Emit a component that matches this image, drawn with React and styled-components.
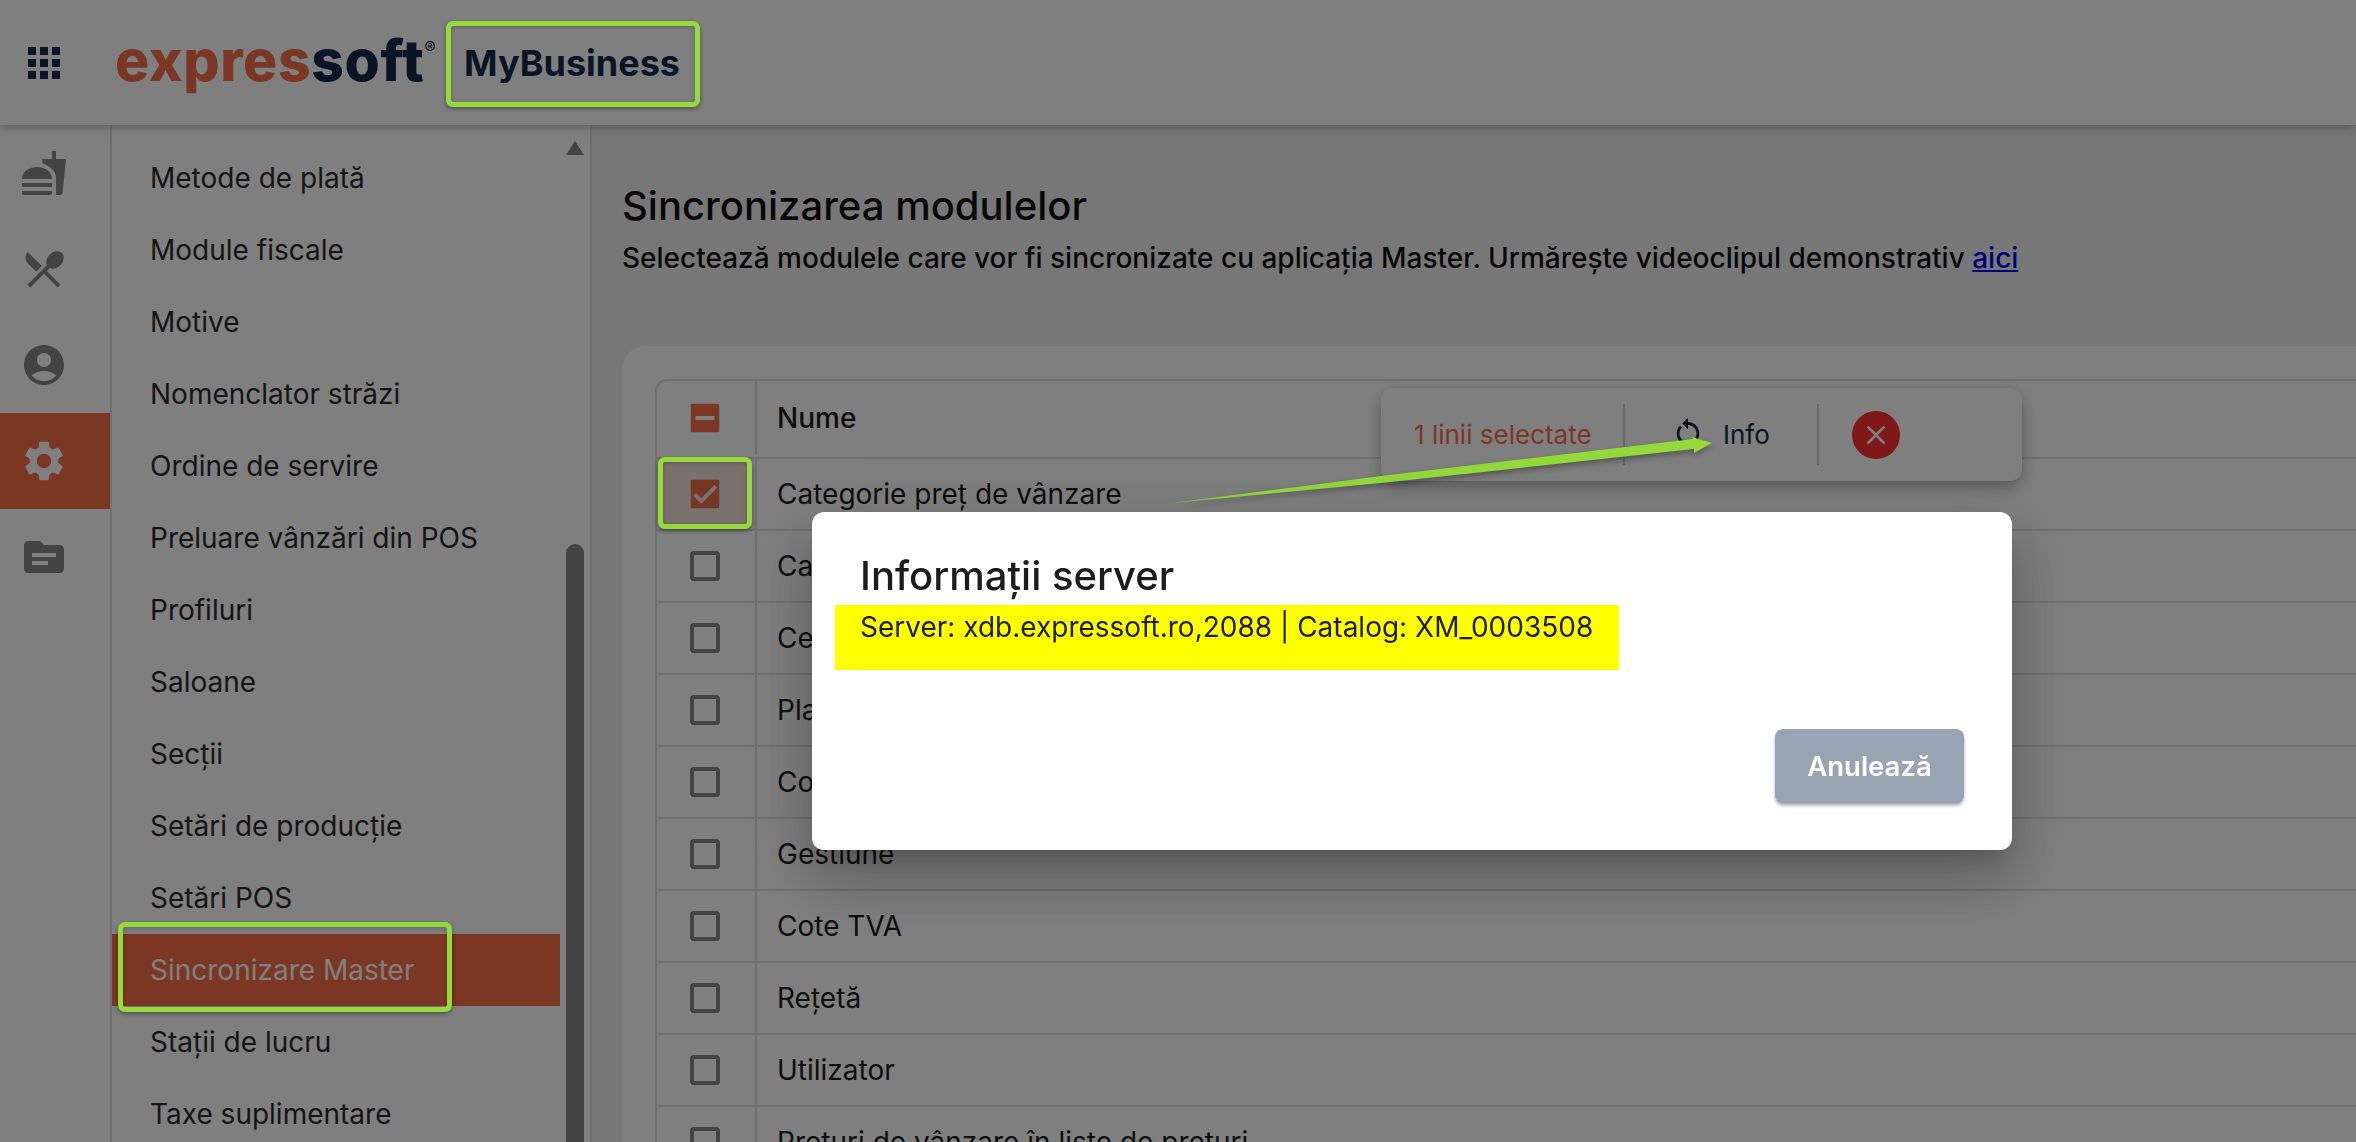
import React from 'react';
import styled, { createGlobalStyle } from 'styled-components';
import {
    MdFastfood,
    MdRestaurantMenu,
    MdAccountCircle,
    MdSettings,
    MdTopic,
    MdRestartAlt,
    MdClose,
    MdCheck,
    MdRemove,
} from 'react-icons/md';

const GlobalStyle = createGlobalStyle`
    html, body {
        margin: 0;
        padding: 0;
        height: 100%;
        overflow: hidden;
        background: #fff;
        font-family: "Inter", "Liberation Sans", sans-serif;
        color: #1a1a1a;
    }
    * {
        box-sizing: border-box;
    }
`;

const Page = styled.div`
    width: 100vw;
    height: 100vh;
    display: flex;
    flex-direction: column;
    overflow: hidden;
`;

const Header = styled.header`
    flex: 0 0 125px;
    display: flex;
    align-items: center;
    padding-left: 28px;
    background: #fff;
    box-shadow: 0 3px 9px rgba(0, 0, 0, 0.25);
    position: relative;
    z-index: 2;
`;

const AppsGrid = styled.div`
    display: grid;
    grid-template-columns: repeat(3, 8px);
    grid-auto-rows: 8px;
    gap: 4px;
    margin-right: 55px;
    div {
        background: #14294a;
    }
`;

const Logo = styled.div`
    flex: 0 0 349px;
    font-size: 57px;
    font-weight: 800;
    letter-spacing: 0.6px;
    line-height: 1;
    color: #14294a;
    margin-top: -4px;
    span {
        color: #f66e48;
    }
    sup {
        font-size: 17px;
        font-weight: 400;
        letter-spacing: 0;
        vertical-align: 27px;
        line-height: 0;
    }
`;

const Product = styled.div`
    font-size: 36px;
    font-weight: 700;
    color: #14294a;
`;

const Body = styled.div`
    flex: 1;
    display: flex;
    min-height: 0;
`;

const Rail = styled.nav`
    flex: 0 0 112px;
    border-right: 2px solid #e0e0e0;
`;

const RailItem = styled.div`
    height: 96px;
    display: flex;
    align-items: center;
    padding-left: 20px;
    font-size: 48px;
    color: ${(p) => (p.$active ? '#fff' : '#868686')};
    background: ${(p) => (p.$active ? '#f66e48' : 'transparent')};
`;

const Sidebar = styled.aside`
    flex: 0 0 480px;
    display: flex;
    border-right: 2px solid #e0e0e0;
`;

const Menu = styled.div`
    flex: 0 0 448px;
    padding-top: 17px;
`;

const MenuItem = styled.div`
    height: 72px;
    display: flex;
    align-items: center;
    padding-left: 38px;
    font-size: 28px;
    color: ${(p) => (p.$active ? '#fff' : '#2b2b2b')};
    background: ${(p) => (p.$active ? '#f66e48' : 'transparent')};
`;

const ScrollTrack = styled.div`
    flex: 0 0 18px;
    margin-left: 6px;
    display: flex;
    flex-direction: column;
    padding-top: 16px;
`;

const ScrollArrow = styled.div`
    width: 0;
    height: 0;
    margin: 0 auto;
    border-left: 9px solid transparent;
    border-right: 9px solid transparent;
    border-bottom: 14px solid #868686;
`;

const ScrollThumb = styled.div`
    flex: 1;
    margin-top: 389px;
    background: #868686;
    border-radius: 9px 9px 0 0;
`;

const Main = styled.main`
    flex: 1;
    min-width: 0;
    background: #efefef;
    padding: 59px 0 0 30px;
    overflow: hidden;
`;

const Title = styled.h1`
    margin: 0;
    font-size: 40px;
    line-height: 44px;
    font-weight: 500;
    color: #111;
`;

const Subtitle = styled.p`
    margin: 10px 0 0;
    font-size: 28px;
    line-height: 40px;
    font-weight: 500;
    color: #111;
    a {
        color: #0000ee;
    }
`;

const Card = styled.section`
    margin-top: 68px;
    width: 1800px;
    padding: 33px;
    background: #fff;
    border-radius: 24px 0 0 0;
    position: relative;
`;

const Table = styled.div`
    border: 2px solid #dedede;
    border-radius: 12px 0 0 0;
`;

const Row = styled.div`
    display: flex;
    height: ${(p) => (p.$head ? '78px' : '72px')};
    padding-bottom: ${(p) => (p.$head ? '2px' : '0')};
    border-bottom: 2px solid #dedede;
`;

const CheckCell = styled.div`
    flex: 0 0 100px;
    display: flex;
    align-items: center;
    justify-content: center;
    padding-right: 2px;
    border-right: 2px solid #dedede;
`;

const NameCell = styled.div`
    flex: 1;
    display: flex;
    align-items: center;
    padding-left: 20px;
    font-size: 28px;
    font-weight: ${(p) => (p.$head ? 500 : 400)};
    color: #1c1c1c;
`;

const Box = styled.div`
    width: 30px;
    height: 30px;
    border-radius: 4px;
    display: flex;
    align-items: center;
    justify-content: center;
    font-size: 30px;
    color: #fff;
    background: ${(p) => (p.$on ? '#f66e48' : 'transparent')};
    border: ${(p) => (p.$on ? 'none' : '4px solid #868686')};
    svg {
        stroke: currentColor;
        stroke-width: 1.2;
    }
`;

const SelectionBar = styled.div`
    position: absolute;
    left: 759px;
    top: 42px;
    width: 641px;
    height: 93px;
    display: flex;
    align-items: center;
    background: #fff;
    border-radius: 12px;
    box-shadow: 0 6px 16px rgba(0, 0, 0, 0.3);
`;

const BarSection = styled.div`
    height: 61px;
    display: flex;
    align-items: center;
    font-size: 26px;
    flex: 0 0 ${(p) => p.$width}px;
    padding-left: ${(p) => p.$pad}px;
    gap: 18px;
    color: ${(p) => p.$color};
    border-right: ${(p) => (p.$line ? '2px solid #d0d0d0' : 'none')};
`;

const RefreshIcon = styled(MdRestartAlt)`
    margin-top: -6px;
`;

const CloseButton = styled.div`
    width: 48px;
    height: 48px;
    border-radius: 50%;
    display: flex;
    align-items: center;
    justify-content: center;
    font-size: 32px;
    background: #fe3333;
    color: #fff;
`;

const Overlay = styled.div`
    position: fixed;
    inset: 0;
    z-index: 3;
    background: rgba(0, 0, 0, 0.5);
`;

const Dialog = styled.div`
    position: fixed;
    z-index: 4;
    left: 812px;
    top: 512px;
    width: 1200px;
    height: 338px;
    padding: 42px 48px 47px 48px;
    display: flex;
    flex-direction: column;
    background: #fff;
    border-radius: 12px;
    box-shadow: 0 16px 22px -10px rgba(0, 0, 0, 0.2), 0 36px 57px 4px rgba(0, 0, 0, 0.14),
        0 14px 69px 12px rgba(0, 0, 0, 0.12);
`;

const DialogTitle = styled.h2`
    margin: 0;
    font-size: 40px;
    line-height: 44px;
    font-weight: 500;
    color: #1c1c1c;
`;

const DialogText = styled.div`
    margin-top: 9px;
    font-size: 28px;
    line-height: 40px;
    color: #1c1c1c;
    position: relative;
    z-index: 1;
`;

const HighlightBlock = styled.div`
    position: absolute;
    left: 23px;
    top: 93px;
    width: 784px;
    height: 65px;
    background: #ffff00;
`;

const DialogActions = styled.div`
    margin-top: auto;
    display: flex;
    justify-content: flex-end;
`;

const CancelButton = styled.button`
    width: 189px;
    height: 74px;
    border: none;
    border-radius: 8px;
    font-family: inherit;
    font-size: 27.5px;
    font-weight: 600;
    color: #fff;
    background: #9aa3b3;
    box-shadow: 0 3px 4px -1px rgba(0, 0, 0, 0.3), 0 2px 3px rgba(0, 0, 0, 0.14);
`;

// callouts drawn on top of the screenshot, not dimmed by the overlay
const Callout = styled.div`
    position: fixed;
    z-index: 4;
    left: ${(p) => p.$x}px;
    top: ${(p) => p.$y}px;
    width: ${(p) => p.$w}px;
    height: ${(p) => p.$h}px;
    border: 5px solid #95d93c;
    border-radius: 7px;
    box-shadow: 0 2px 5px rgba(0, 0, 0, 0.4), inset 0 1px 4px rgba(0, 0, 0, 0.25);
    background: ${(p) => p.$tint || 'transparent'};
`;

const ArrowSvg = styled.svg`
    position: fixed;
    z-index: 4;
    left: 1160px;
    top: 430px;
    filter: drop-shadow(0 3px 3px rgba(0, 0, 0, 0.35));
`;

const menuItems = [
    'Metode de plată',
    'Module fiscale',
    'Motive',
    'Nomenclator străzi',
    'Ordine de servire',
    'Preluare vânzări din POS',
    'Profiluri',
    'Saloane',
    'Secții',
    'Setări de producție',
    'Setări POS',
    'Sincronizare Master',
    'Stații de lucru',
    'Taxe suplimentare',
];

const tableRows = [
    'Categorie preț de vânzare',
    'Casă de marcat',
    'Centre de cost',
    'Plată',
    'Companii',
    'Gestiune',
    'Cote TVA',
    'Rețetă',
    'Utilizator',
    'Prețuri de vânzare în liste de prețuri',
];

export default function App() {
    return (
        <Page>
            <GlobalStyle />
            <Header>
                <AppsGrid>
                    {Array.from({ length: 9 }).map((_, i) => (
                        <div key={i} />
                    ))}
                </AppsGrid>
                <Logo>
                    <span>expres</span>soft<sup>®</sup>
                </Logo>
                <Product>MyBusiness</Product>
            </Header>
            <Body>
                <Rail>
                    <RailItem><MdFastfood /></RailItem>
                    <RailItem><MdRestaurantMenu /></RailItem>
                    <RailItem><MdAccountCircle /></RailItem>
                    <RailItem $active><MdSettings /></RailItem>
                    <RailItem><MdTopic /></RailItem>
                </Rail>
                <Sidebar>
                    <Menu>
                        {menuItems.map((x) => (
                            <MenuItem key={x} $active={x === 'Sincronizare Master'}>{x}</MenuItem>
                        ))}
                    </Menu>
                    <ScrollTrack>
                        <ScrollArrow />
                        <ScrollThumb />
                    </ScrollTrack>
                </Sidebar>
                <Main>
                    <Title>Sincronizarea modulelor</Title>
                    <Subtitle>
                        Selectează modulele care vor fi sincronizate cu aplicația Master. Urmărește videoclipul demonstrativ <a href="#aici">aici</a>
                    </Subtitle>
                    <Card>
                        <Table>
                            <Row $head>
                                <CheckCell><Box $on><MdRemove /></Box></CheckCell>
                                <NameCell $head>Nume</NameCell>
                            </Row>
                            {tableRows.map((x, i) => (
                                <Row key={x}>
                                    <CheckCell>
                                        {i === 0 ? <Box $on><MdCheck /></Box> : <Box />}
                                    </CheckCell>
                                    <NameCell>{x}</NameCell>
                                </Row>
                            ))}
                        </Table>
                        <SelectionBar>
                            <BarSection $width={244} $pad={33} $color="#f66e48" $line>1 linii selectate</BarSection>
                            <BarSection $width={194} $pad={46} $color="#14294a" $line>
                                <RefreshIcon size={34} />
                                Info
                            </BarSection>
                            <BarSection $width={100} $pad={33}>
                                <CloseButton><MdClose /></CloseButton>
                            </BarSection>
                        </SelectionBar>
                    </Card>
                </Main>
            </Body>
            <Overlay />
            <Callout $x={446} $y={21} $w={254} $h={86} />
            <Callout $x={118} $y={922} $w={334} $h={90} />
            <Callout $x={658} $y={457} $w={94} $h={72} $tint="rgba(100, 50, 40, 0.2)" />
            <ArrowSvg width="560" height="90" viewBox="0 0 560 90">
                <path d="M12 73 L221 46 L533 9 L532 7 L552 13 L534 23 L534 19 L221 53 Z" fill="#95d93c" />
            </ArrowSvg>
            <Dialog>
                <HighlightBlock />
                <DialogTitle>Informații server</DialogTitle>
                <DialogText>Server: xdb.expressoft.ro,2088 | Catalog: XM_0003508</DialogText>
                <DialogActions>
                    <CancelButton>Anulează</CancelButton>
                </DialogActions>
            </Dialog>
        </Page>
    );
}
